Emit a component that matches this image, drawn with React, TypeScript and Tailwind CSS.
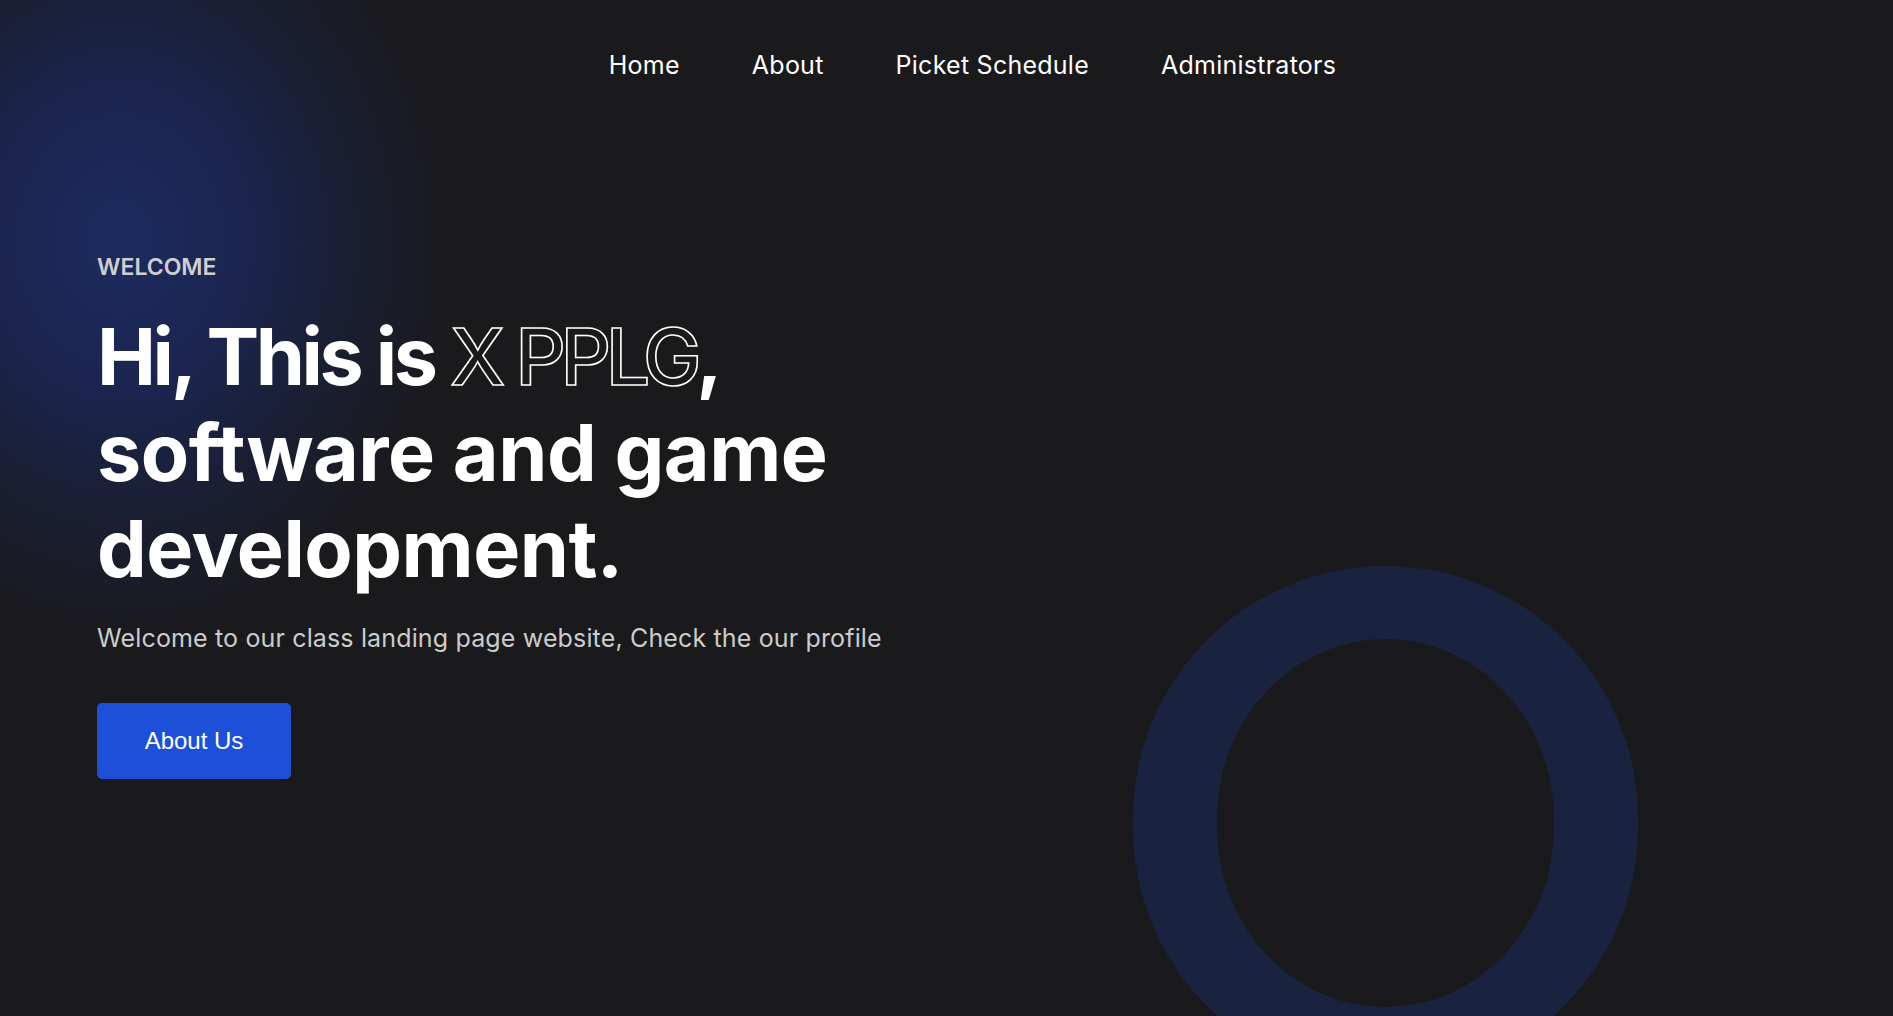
import React, { FC } from 'react'

const navLinks = ['Home', 'About', 'Picket Schedule', 'Administrators']

export const App: FC = () => {
  return (
    <div className="relative h-screen w-full overflow-hidden bg-[#1a1a1c] bg-[image:radial-gradient(ellipse_340px_410px_at_120px_240px,#1c2b60_0%,#1b2550_35%,#1a1e30_70%,#1a1a1c_100%)] font-['Inter',sans-serif]">
      {/* big decorative ring */}
      <div className="absolute left-[1133px] top-[566px] h-[514px] w-[505px] rounded-full border-x-[84px] border-y-[73px] border-[#19223f]" />

      <nav className="relative flex justify-center gap-[72px] pl-[52px] pt-[47px]">
        {navLinks.map((link) => (
          <a key={link} href="#" className="text-[25px] leading-[36px] tracking-[0.25px] text-white">
            {link}
          </a>
        ))}
      </nav>

      <section className="relative px-[97px] pt-[168px]">
        <p className="text-[23px] font-semibold leading-[32px] text-[#cfcfcf]">WELCOME</p>
        <h1 className="mt-[25px] text-[79px] font-bold leading-[96px] tracking-[-0.5px] text-white">
          <span className="tracking-[-3.4px]">Hi, This is </span>
          <span className="font-medium tracking-[-5.5px] text-transparent [-webkit-text-stroke:1.6px_white]">X PPLG</span>,
          <br />
          software and game
          <br />
          development.
        </h1>
        <p className="mt-[24px] text-[25px] leading-[36px] tracking-[0.15px] text-[#cccccc]">
          Welcome to our class landing page website, Check the our profile
        </p>
        <button className="mt-[47px] h-[76px] w-[194px] rounded-[5px] bg-[#1e4fd8] font-['Liberation_Sans',Arial,sans-serif] text-[24px] text-white">
          About Us
        </button>
      </section>
    </div>
  )
}

export default App
